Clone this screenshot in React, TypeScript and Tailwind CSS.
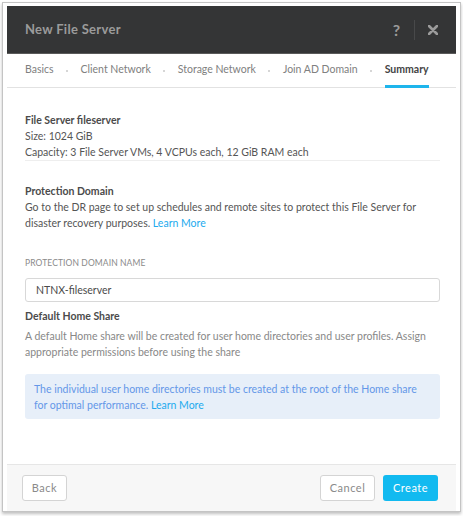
const tabs = ['Basics', 'Client Network', 'Storage Network', 'Join AD Domain', 'Summary'];

export default function App() {
  return (
    <div className="w-[463px] h-[516px] bg-white pt-[2px] px-[2px]" style={{ fontFamily: 'Lato, "Open Sans", sans-serif' }}>
      <div className="h-[510px] border border-[#c4c4c4] shadow-[0_2px_3px_rgba(0,0,0,0.25)] px-[4px] pt-[3px] flex flex-col">
        {/* Header */}
        <div className="h-[48px] bg-[#343536] flex items-center pl-[18px] pr-[18px] border-b border-[#5a5a5a]">
          <span className="text-[13px] font-bold text-[#9b9b9b] tracking-[0.3px]">New File Server</span>
          <div className="ml-auto flex items-center h-full">
            <span className="text-[16px] font-bold text-[#9b9b9b] pr-[14px]">?</span>
            <div className="w-px h-[20px] bg-[#48494a]" />
            <svg width="10" height="10" viewBox="0 0 10 10" className="ml-[13px]">
              <path d="M1 1 L9 9 M9 1 L1 9" stroke="#9b9b9b" strokeWidth="2.6" strokeLinecap="round" />
            </svg>
          </div>
        </div>

        {/* Tabs */}
        <div className="h-[34px] flex items-stretch pl-[18px] border-b border-[#e2e2e2] text-[10.5px]">
          {tabs.map((t, i) => (
            <div key={t} className="flex items-center">
              {i > 0 && <span className="w-[2px] h-[2px] rounded-full bg-[#c8c8c8] ml-[12px] mr-[13px]" />}
              <div
                className={`h-full flex items-center border-b-[3px] mb-[-1px] ${
                  t === 'Summary' ? 'border-[#1eb5ec] text-[#444444] font-bold' : 'border-transparent text-[#808080]'
                }`}
              >
                {t}
              </div>
            </div>
          ))}
        </div>

        {/* Body */}
        <div className="flex-1 pl-[18px] pr-[16px] pt-[24px] text-[10.5px] leading-[16px] text-[#555555]">
          <div className="border-b border-[#eeeeee]">
            <div className="font-bold text-[#4b4b4b]">File Server fileserver</div>
            <div>Size: 1024 GiB</div>
            <div>Capacity: 3 File Server VMs, 4 VCPUs each, 12 GiB RAM each</div>
          </div>

          <div className="mt-[22px]">
            <div className="font-bold text-[#4b4b4b]">Protection Domain</div>
            <div>
              Go to the DR page to set up schedules and remote sites to protect this File Server for disaster recovery purposes.{' '}
              <span className="text-[#22aaee]">Learn More</span>
            </div>
          </div>

          <div className="mt-[25px] text-[8.5px] leading-[14px] text-[#8a8a8a] uppercase tracking-[0.1px]">Protection Domain Name</div>
          <div className="mt-[8px] h-[24px] border border-[#d8d8d8] rounded-[3px] flex items-center pl-[10px] text-[#4b4b4b]">
            NTNX-fileserver
          </div>

          <div className="mt-[6px] font-bold text-[#4b4b4b]">Default Home Share</div>
          <div className="mt-[4px] text-[#888888]">
            A default Home share will be created for user home directories and user profiles. Assign appropriate permissions before using the share
          </div>

          <div className="mt-[14px] bg-[#e7eff9] rounded-[3px] pl-[9px] pr-[8px] pt-[7px] pb-[6px] text-[#6497e8]">
            The individual user home directories must be created at the root of the Home share for optimal performance.{' '}
            <span className="text-[#22aaee]">Learn More</span>
          </div>
        </div>

        {/* Footer */}
        <div className="h-[47px] bg-[#f7f7f7] border-t border-[#e6e6e6] flex items-center pl-[15px] pr-[18px] text-[11px]">
          <button className="h-[26px] w-[45px] bg-white border border-[#d4d4d4] rounded-[3px] text-[#8a8a8a] tracking-[0.5px]">
            Back
          </button>
          <button className="ml-auto h-[26px] w-[55px] bg-white border border-[#d4d4d4] rounded-[3px] text-[#8a8a8a] tracking-[0.5px]">
            Cancel
          </button>
          <button className="ml-[8px] h-[26px] w-[55px] bg-[#12baf0] rounded-[3px] text-white tracking-[0.5px]">
            Create
          </button>
        </div>
      </div>
    </div>
  );
}
